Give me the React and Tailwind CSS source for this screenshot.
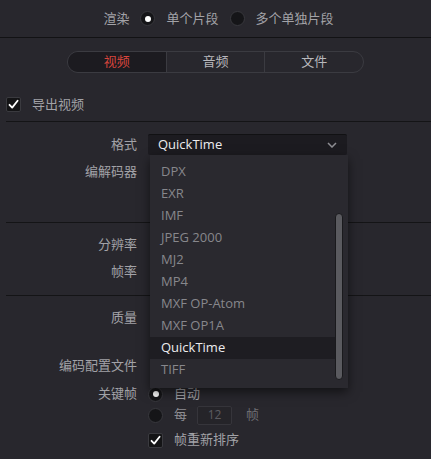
import React from "react";

const font = { fontFamily: '"Open Sans", "Noto Sans CJK SC", sans-serif' };

function Radio({ on }) {
  return (
    <span className="flex h-[15px] w-[15px] shrink-0 items-center justify-center rounded-full border border-[#38383d] bg-[#151518]">
      {on && <span className="h-[6px] w-[6px] rounded-full bg-white" />}
    </span>
  );
}

function Check() {
  return (
    <span className="flex h-[15px] w-[15px] shrink-0 items-center justify-center rounded-[2px] border border-[#3a3a3f] bg-[#141416]">
      <svg width="11" height="11" viewBox="0 0 11 11">
        <path d="M1.5 5.8 L4.2 8.6 L9.6 1.8" fill="none" stroke="#ffffff" strokeWidth="1.8" strokeLinecap="round" strokeLinejoin="round" />
      </svg>
    </span>
  );
}

function Label({ children }) {
  return <div className="w-[137px] shrink-0 pr-0 text-right text-[13px] text-[#a2a2a7]">{children}</div>;
}

const items = ["DPX", "EXR", "IMF", "JPEG 2000", "MJ2", "MP4", "MXF OP-Atom", "MXF OP1A", "QuickTime", "TIFF"];

export default function App() {
  return (
    <div className="h-[459px] w-[431px] overflow-hidden bg-[#28272d] select-none" style={font}>
      {/* top bar */}
      <div className="flex h-[38px] items-center justify-center gap-[11px] border-b border-[#121214] pl-[6px] text-[13px] text-[#a2a2a7]">
        <span>渲染</span>
        <Radio on />
        <span>单个片段</span>
        <Radio />
        <span>多个单独片段</span>
      </div>

      {/* tabs */}
      <div className="flex justify-center pt-[13px]">
        <div className="flex h-[22px] w-[297px] overflow-hidden rounded-full border border-[#3b3b41] text-[13px]">
          <div className="flex flex-1 items-center justify-center bg-[#1c1b20] text-[#d8453c]">视频</div>
          <div className="flex flex-1 items-center justify-center border-l border-[#3b3b41] text-[#b8b8bc]">音频</div>
          <div className="flex flex-1 items-center justify-center border-l border-[#3b3b41] text-[#b8b8bc]">文件</div>
        </div>
      </div>

      {/* export video */}
      <div className="mt-[24px] flex h-[15px] items-center gap-[11px] pl-[6px] text-[13px] text-[#a2a2a7]">
        <Check />
        <span>导出视频</span>
      </div>

      <div className="ml-[6px] mt-[9px] border-t border-[#141416]" />

      {/* section A */}
      <div className="h-[100px] pt-[12px]">
        <div className="flex h-[21px] items-center gap-[11px]">
          <Label>格式</Label>
          <div className="relative z-10 w-[199px]">
            <div className="flex h-[21px] items-center justify-between rounded-[2px] border-t border-[#111113] bg-[#1c1b20] pl-[10px] pr-[10px] text-[13px] text-[#ececee]">
              <span>QuickTime</span>
              <svg width="10" height="6" viewBox="0 0 10 6">
                <path d="M1 1 L5 5 L9 1" fill="none" stroke="#8e8e93" strokeWidth="1.5" />
              </svg>
            </div>
            <div className="absolute left-[2px] top-[21px] h-[233px] w-[198px] bg-[#2a292f] pt-[6px] shadow-[0_4px_10px_rgba(0,0,0,0.55)]">
              {items.map((it) => (
                <div
                  key={it}
                  className={
                    it === "QuickTime"
                      ? "flex h-[22px] w-[185px] items-center bg-[#1e1d22] pl-[11px] text-[13px] text-[#ececee]"
                      : "flex h-[22px] w-[185px] items-center pl-[11px] text-[13px] text-[#87878c]"
                  }
                >
                  {it}
                </div>
              ))}
              <div className="absolute left-[185px] top-[58px] h-[167px] w-[8px] rounded-full border border-[#1a1a1d] bg-[#5a5a5f]" />
            </div>
          </div>
        </div>
        <div className="mt-[6px] flex h-[22px] items-center gap-[11px]">
          <Label>编解码器</Label>
        </div>
      </div>

      <div className="ml-[6px] border-t border-[#141416]" />

      {/* section B */}
      <div className="h-[72px] pt-[11px]">
        <div className="flex h-[22px] items-center">
          <Label>分辨率</Label>
        </div>
        <div className="mt-[5px] flex h-[22px] items-center">
          <Label>帧率</Label>
        </div>
      </div>

      <div className="ml-[6px] border-t border-[#141416]" />

      {/* section C */}
      <div className="pt-[11px]">
        <div className="flex h-[22px] items-center">
          <Label>质量</Label>
        </div>
        <div className="mt-[26px] flex h-[22px] items-center">
          <Label>编码配置文件</Label>
        </div>
        <div className="mt-[6px] flex h-[22px] items-center gap-[11px]">
          <Label>关键帧</Label>
          <div className="flex items-center gap-[11px] text-[13px] text-[#a2a2a7]">
            <Radio on />
            <span>自动</span>
          </div>
        </div>
        <div className="flex h-[20px] items-center gap-[11px]">
          <div className="w-[137px] shrink-0" />
          <div className="flex items-center text-[13px] text-[#8e8e93]">
            <Radio />
            <span className="ml-[11px]">每</span>
            <span className="ml-[10px] flex h-[19px] w-[35px] items-center justify-center rounded-[2px] border border-[#36353b] bg-[#252429] text-[12px] text-[#5c5c61]">12</span>
            <span className="ml-[14px] text-[#6e6e73]">帧</span>
          </div>
        </div>
        <div className="mt-[5px] flex h-[20px] items-center gap-[11px]">
          <div className="w-[137px] shrink-0" />
          <div className="flex items-center gap-[11px] text-[13px] text-[#a2a2a7]">
            <Check />
            <span>帧重新排序</span>
          </div>
        </div>
      </div>
    </div>
  );
}
